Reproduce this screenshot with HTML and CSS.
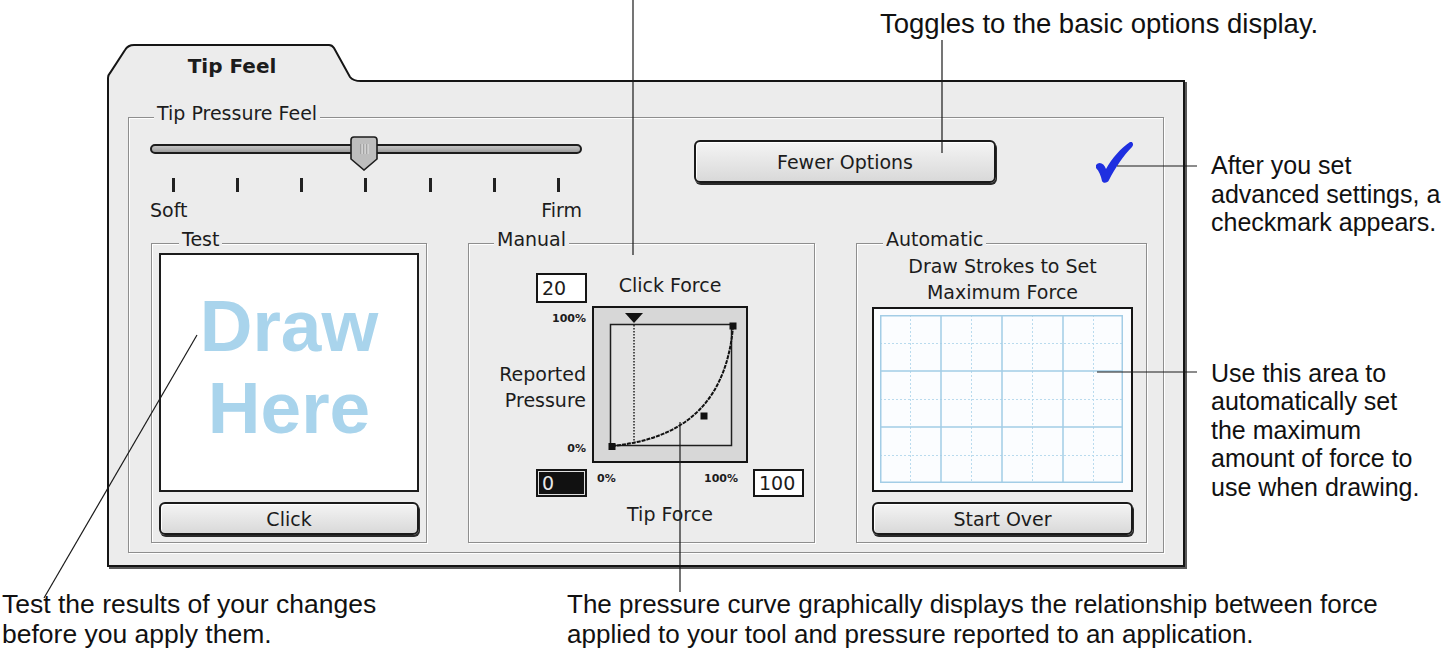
FILE: index.html
```html
<!DOCTYPE html>
<html>
<head>
    <meta charset="UTF-8">
    <meta name="viewport" content="width=device-width, initial-scale=1.0">
    <title>Tip Feel</title>
    <link rel="stylesheet" href="styles.css">
</head>
<body>
    <div class="figure">
        <p class="note note-top">Toggles to the basic options display.</p>

        <div class="middle">
            <div class="window">
                <div class="tab">
                    <svg class="tab-shape" width="256" height="40" viewBox="0 0 256 40">
                        <path d="M1,40 L1,35 Q1,32 3,30 L18,7 Q21,2 27,2 L222,2 Q225,2 227,5 L243,34 Q246,38 254,38 L254,40 Z" fill="#ececec"/>
                        <path d="M1,40 L1,35 Q1,32 3,30 L18,7 Q21,2 27,2 L222,2 Q225,2 227,5 L243,34 Q246,38 254,38" fill="none" stroke="#151515" stroke-width="2"/>
                    </svg>
                    <span class="tab-label">Tip Feel</span>
                </div>

                <div class="panel">
                    <fieldset class="group group-main">
                        <legend>Tip Pressure Feel</legend>

                        <div class="top-row">
                            <div class="slider">
                                <div class="track"></div>
                                <svg class="thumb" width="30" height="35" viewBox="0 0 30 35">
                                    <path d="M2,4 Q2,1 5,1 L25,1 Q28,1 28,4 L28,23 L15,34 L2,23 Z" fill="#bdbdbd" stroke="#1c1c1c" stroke-width="1.6"/>
                                    <path d="M12,8 V18 M15,8 V18 M18,8 V18" stroke="#8a8a8a" stroke-width="1"/>
                                    <path d="M13,8 V18 M16,8 V18 M19,8 V18" stroke="#e6e6e6" stroke-width="1"/>
                                </svg>
                                <div class="ticks">
                                    <i></i><i></i><i></i><i></i><i></i><i></i><i></i>
                                </div>
                                <div class="slider-labels">
                                    <span>Soft</span>
                                    <span>Firm</span>
                                </div>
                            </div>

                            <button class="mac-btn btn-fewer">Fewer Options</button>

                            <svg class="check" width="38" height="42" viewBox="0 0 38 42">
                                <path d="M0,23 C3,19 8,21 10,27 C16,16 25,6 34,0 C37,-1 38,3 36,5 C28,13 19,26 13,38 C12,41 7,42 6,39 C5,34 3,29 0,26 Z" fill="#1f2fe0"/>
                            </svg>
                        </div>

                        <div class="sub-groups">
                            <fieldset class="group group-test">
                                <legend>Test</legend>
                                <div class="draw-area">
                                    <span class="draw-word">Draw</span>
                                    <span class="draw-word">Here</span>
                                </div>
                                <button class="mac-btn">Click</button>
                            </fieldset>

                            <fieldset class="group group-manual">
                                <legend>Manual</legend>
                                <div class="manual-grid">
                                    <input class="field" type="text" value="20" readonly>
                                    <div class="caption">Click Force</div>
                                    <div></div>

                                    <div class="axis-labels">
                                        <span class="pct pct-top">100%</span>
                                        <span class="axis-name">Reported<br>Pressure</span>
                                        <span class="pct pct-bottom">0%</span>
                                    </div>
                                    <svg class="curve" width="156" height="157" viewBox="0 0 156 157">
                                        <rect x="1" y="1" width="154" height="155" fill="#d7d7d7" stroke="#141414" stroke-width="2"/>
                                        <rect x="18.5" y="18.5" width="121" height="121" fill="#e3e3e3" stroke="#1e1e1e" stroke-width="1.5"/>
                                        <path d="M42,19 V139" stroke="#222" stroke-width="1.5" stroke-dasharray="1.5 1.5"/>
                                        <path d="M33,7 H51 L42,17 Z" fill="#111"/>
                                        <path d="M20,140 C78,134 133,109 141,21" fill="none" stroke="#111" stroke-width="2" stroke-dasharray="4 1"/>
                                        <rect x="16.5" y="137" width="7" height="7" fill="#111"/>
                                        <rect x="137.5" y="16.5" width="7" height="7" fill="#111"/>
                                        <rect x="108.5" y="106.5" width="7" height="7" fill="#111"/>
                                    </svg>
                                    <div></div>

                                    <input class="field field-selected" type="text" value="0" readonly>
                                    <div class="force-range">
                                        <span class="pct">0%</span>
                                        <span class="pct">100%</span>
                                    </div>
                                    <input class="field field-max" type="text" value="100" readonly>

                                    <div></div>
                                    <div class="caption">Tip Force</div>
                                    <div></div>
                                </div>
                            </fieldset>

                            <fieldset class="group group-auto">
                                <legend>Automatic</legend>
                                <p class="auto-hint">Draw Strokes to Set<br>Maximum Force</p>
                                <div class="stroke-pad">
                                    <svg width="243" height="168" viewBox="0 0 243 168">
                                        <g stroke="#b9dbee" stroke-width="1" stroke-dasharray="2 2">
                                            <path d="M30.5,0 V168 M91.5,0 V168 M152.5,0 V168 M213.5,0 V168"/>
                                            <path d="M0,28.5 H243 M0,84.5 H243 M0,140.5 H243"/>
                                        </g>
                                        <g stroke="#a3cde6" stroke-width="1.5" fill="none">
                                            <path d="M61,0 V168 M122,0 V168 M183,0 V168"/>
                                            <path d="M0,56 H243 M0,112 H243"/>
                                            <rect x="0.75" y="0.75" width="241.5" height="166.5"/>
                                        </g>
                                    </svg>
                                </div>
                                <button class="mac-btn">Start Over</button>
                            </fieldset>
                        </div>
                    </fieldset>
                </div>
            </div>

            <div class="side-notes">
                <p class="note note-check">After you set<br>advanced settings, a<br>checkmark appears.</p>
                <p class="note note-area">Use this area to<br>automatically set<br>the maximum<br>amount of force to<br>use when drawing.</p>
            </div>
        </div>

        <div class="bottom-notes">
            <p class="note note-test">Test the results of your changes<br>before you apply them.</p>
            <p class="note note-curve">The pressure curve graphically displays the relationship between force<br>applied to your tool and pressure reported to an application.</p>
        </div>

        <!-- callout leader lines -->
        <svg class="leaders" width="1450" height="667" viewBox="0 0 1450 667">
            <g stroke="#1a1a1a" stroke-width="1.2" fill="none">
                <path d="M633,0 V255"/>
                <path d="M942,40 V153"/>
                <path d="M1117,166 H1197"/>
                <path d="M1097,372 H1197"/>
                <path d="M197,335 L44,598"/>
                <path d="M680,422 V592"/>
            </g>
        </svg>
    </div>
</body>
</html>
```

FILE: styles.css
```css
body {
    margin: 0;
    background-color: #fff;
    font-family: "Liberation Sans", Arial, sans-serif;
    color: #111;
}

.figure {
    position: relative;
    width: 1450px;
    height: 667px;
    overflow: hidden;
}

/* callout text */
.note {
    margin: 0;
    font-size: 25px;
    line-height: 28.5px;
}

.note-top {
    margin-top: 10px;
    padding-left: 880px;
    font-size: 27.5px;
    line-height: 28px;
}

.middle {
    display: flex;
    align-items: flex-start;
    margin-top: 5px;
}

.window {
    margin-left: 107px;
    width: 1078px;
    font-family: "DejaVu Sans", sans-serif;
    font-size: 19px;
    color: #1c1c1c;
}

/* folder tab */
.tab {
    position: relative;
    z-index: 1;
    width: 256px;
    height: 40px;
    margin-bottom: -3px;
}

.tab-shape {
    position: absolute;
    left: 0;
    top: 0;
}

.tab-label {
    position: relative;
    display: block;
    width: 250px;
    padding-top: 11px;
    text-align: center;
    font-weight: bold;
    font-size: 20px;
    line-height: 24px;
}

.panel {
    box-sizing: border-box;
    width: 1078px;
    padding: 25px 19px 12px 19px;
    border: 2px solid #151515;
    background-color: #ececec;
    box-shadow: 2px 2px 0 #5a5a5a;
}

/* etched group boxes */
.group {
    box-sizing: border-box;
    min-width: 0;
    margin: 0;
    padding: 0;
    border: 1px solid #8e8e8e;
    box-shadow: 1px 1px 0 #fff, inset 1px 1px 0 #fff;
}

.group legend {
    padding: 0 3px 8px;
    background-color: #ececec;
    font-size: 19px;
    line-height: 12px;
}

.group-main {
    padding: 0 14px 9px 21px;
}

.group-main > legend {
    margin-left: 4px;
}

.top-row {
    display: flex;
    align-items: flex-start;
    height: 106px;
}

/* slider */
.slider {
    position: relative;
    width: 432px;
    margin-top: 9px;
}

.track {
    box-sizing: border-box;
    height: 10px;
    margin-top: 8px;
    border: 2px solid #1c1c1c;
    border-radius: 5px;
    background: linear-gradient(#c4c4c4, #9c9c9c);
}

.thumb {
    position: absolute;
    left: 199px;
    top: 0;
}

.ticks {
    display: flex;
    justify-content: space-between;
    height: 14px;
    margin-top: 24px;
    padding: 0 22px;
}

.ticks i {
    width: 3px;
    background-color: #222;
}

.slider-labels {
    display: flex;
    justify-content: space-between;
    margin-top: 7px;
    line-height: 22px;
}

/* push buttons */
.mac-btn {
    display: block;
    box-sizing: border-box;
    width: 100%;
    height: 33px;
    padding: 0;
    border: 2px solid #1a1a1a;
    border-radius: 6px;
    background: linear-gradient(#f4f4f4, #d9d9d9);
    box-shadow: 1px 2px 0 #2a2a2a, inset 1px 1px 0 #fff;
    font-family: "DejaVu Sans", sans-serif;
    font-size: 19px;
    color: #1c1c1c;
}

.btn-fewer {
    width: 302px;
    height: 43px;
    margin-top: 13px;
    margin-left: 112px;
}

.check {
    margin-top: 15px;
    margin-left: 100px;
}

.sub-groups {
    display: flex;
    gap: 41px;
    padding-left: 1px;
}

/* Test */
.group-test {
    width: 276px;
    padding: 0 7px 7px;
}

.group-test > legend {
    margin-left: 20px;
}

.draw-area {
    box-sizing: border-box;
    height: 239px;
    margin-bottom: 10px;
    padding-top: 30px;
    border: 2px solid #1c1c1c;
    background-color: #fff;
    text-align: center;
    font-family: "Liberation Sans", Arial, sans-serif;
    font-weight: bold;
    font-size: 73px;
    color: #a9d4ec;
}

.draw-word {
    display: block;
    height: 82px;
    line-height: 82px;
}

/* Manual */
.group-manual {
    width: 347px;
    padding: 0 0 18px;
}

.group-manual > legend {
    margin-left: 25px;
}

.manual-grid {
    display: grid;
    grid-template-columns: 118px 156px 51px;
    grid-template-rows: 33px 163px 33px 22px;
    column-gap: 5px;
    padding-top: 20px;
}

.field {
    box-sizing: border-box;
    justify-self: end;
    width: 51px;
    height: 30px;
    margin: 0;
    padding: 0 4px;
    border: 2px solid #151515;
    background-color: #fff;
    font-family: "DejaVu Sans", sans-serif;
    font-size: 19px;
    color: #1c1c1c;
    outline: none;
}

.field-selected,
.field-max {
    height: 28px;
}

.field-selected {
    background-color: #111;
    color: #e8e8e8;
    box-shadow: inset 0 0 0 1px #e0e0e0;
}

.caption {
    text-align: center;
    line-height: 24px;
}

.axis-labels {
    display: flex;
    flex-direction: column;
    align-items: flex-end;
    padding-right: 1px;
}

.axis-name {
    margin-top: 35px;
    line-height: 26px;
    text-align: right;
}

.pct {
    font-weight: bold;
    font-size: 11px;
    line-height: 14px;
}

.pct-top {
    margin-top: 6px;
}

.pct-bottom {
    margin-top: 29px;
}

.force-range {
    display: flex;
    justify-content: space-between;
    padding: 3px 10px 0 5px;
}

/* Automatic */
.group-auto {
    width: 291px;
    padding: 0 13px 7px 15px;
}

.group-auto > legend {
    margin-left: 11px;
}

.auto-hint {
    margin: 0;
    text-align: center;
    line-height: 26px;
}

.stroke-pad {
    box-sizing: border-box;
    height: 185px;
    margin: 2px 0 10px;
    padding: 6px 8px 7px 6px;
    border: 2px solid #151515;
    background-color: #fbfdff;
}

.stroke-pad svg {
    display: block;
}

.side-notes {
    margin-left: 26px;
}

.note-check {
    margin-top: 108px;
}

.note-area {
    margin-top: 122px;
}

.bottom-notes {
    display: flex;
    margin-top: 22px;
}

.note-test {
    width: 565px;
    padding-left: 2px;
    font-size: 26.5px;
    line-height: 30px;
}

.note-curve {
    font-size: 26px;
    line-height: 30px;
}

.leaders {
    position: absolute;
    left: 0;
    top: 0;
    pointer-events: none;
}
```
